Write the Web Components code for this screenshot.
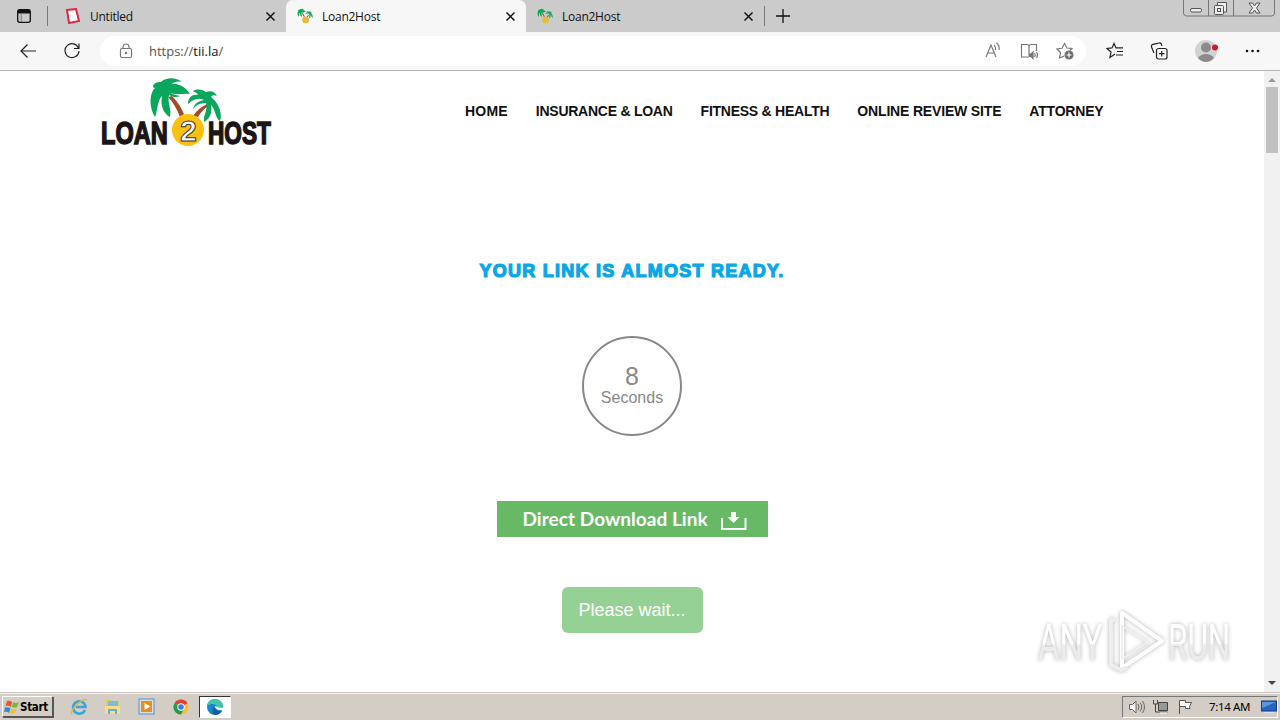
<!DOCTYPE html>
<html lang="en">
<head>
<meta charset="utf-8">
<title>Loan2Host</title>
<style>
  body {
    margin: 0;
    width: 1280px;
    height: 720px;
    overflow: hidden;
    display: flex;
    flex-direction: column;
    font-family: "Liberation Sans", Arial, sans-serif;
    background: #fff;
  }
  .view {
    display: flex;
    height: 621px;
  }
</style>
</head>
<body>
<tab-strip>
  <browser-tab icon="page" style="width:232px">Untitled</browser-tab>
  <browser-tab icon="palm" active style="width:240px">Loan2Host</browser-tab>
  <browser-tab icon="palm" style="width:238px">Loan2Host</browser-tab>
</tab-strip>
<address-bar><b>tii.la</b>/</address-bar>
<div class="view">
  <loan-page>
    <site-header slot="header">
      <a style="letter-spacing:.2px">HOME</a>
      <a style="letter-spacing:-.25px">INSURANCE &amp; LOAN</a>
      <a style="letter-spacing:-.25px">FITNESS &amp; HEALTH</a>
      <a style="letter-spacing:-.17px">ONLINE REVIEW SITE</a>
      <a style="letter-spacing:-.2px">ATTORNEY</a>
    </site-header>
    <count-down value="8">Seconds</count-down>
    <download-button>Direct Download Link</download-button>
    <wait-button>Please wait...</wait-button>
  </loan-page>
  <scroll-bar></scroll-bar>
</div>
<task-bar>7:14 AM</task-bar>

<script>
const palm = `
  <path d="M78 26L82 25C87 30 91 36 94 43L90 46C87 38 83 31 78 26Z" fill="#a34c2c"/>
  <path d="M117 33C111 36 106 40 103 45L108 46C111 41 114 38 118 35Z" fill="#a34c2c"/>
  <g fill="#0aa65b">
    <path d="M78 21C87 25 92 22 100 23C96 16 88 12 81 13C84 11 88 10 92 11C86 6 76 6 71 11C65 10 60 16 65 17C59 22 59 37 65 46C68 39 67 30 72 25C70 35 74 43 80 46C82 38 77 32 79 24C84 27 87 26 90 25C86 24 82 23 78 21Z"/>
    <path d="M114 29C108 26 102 29 98 33C98 26 103 23 108 24C107 21 104 21 103 20C108 17 113 19 116 21C121 19 125 21 127 25C124 24 122 24 121 26C128 31 133 42 130 50C125 47 126 39 121 34C122 41 121 47 114 51C113 44 118 40 116 32C110 32 106 34 103 38C104 33 108 30 114 29Z"/>
  </g>`;

class BrowserTab extends HTMLElement {
  constructor() {
    super();
    this.attachShadow({ mode: "open" });
    const icon = this.getAttribute("icon") === "palm"
      ? `<svg width="16" height="16" viewBox="58 4 74 74"><circle cx="98" cy="59" r="16" fill="#e2bd43"/>${palm}</svg>`
      : `<svg width="16" height="16" viewBox="0 0 16 16"><path d="M2 2l9-1 3 12-10 2z" fill="#fff" stroke="#e2263f" stroke-width="2"/></svg>`;
    this.shadowRoot.innerHTML = `
      <style>
        :host {
          box-sizing: border-box;
          display: flex;
          align-items: center;
          height: 32px;
          padding: 0 10px 0 11px;
          font: 12px "Open Sans", sans-serif;
          color: #111;
        }
        :host([active]) {
          background: #f7f7f7;
          border-radius: 7px 7px 0 0;
        }
        .title {
          flex: 1;
          margin-left: 9px;
          letter-spacing: -.25px;
          white-space: nowrap;
        }
      </style>
      ${icon}
      <span class="title"><slot></slot></span>
      <svg width="11" height="11" viewBox="0 0 11 11"><path d="M1.5 1.5l8 8m0-8l-8 8" stroke="#111" stroke-width="1.5"/></svg>
    `;
  }
}
customElements.define("browser-tab", BrowserTab);

class TabStrip extends HTMLElement {
  constructor() {
    super();
    this.attachShadow({ mode: "open" });
    this.shadowRoot.innerHTML = `
      <style>
        :host {
          display: flex;
          height: 32px;
          background: #cbcbcb;
        }
        .menu {
          display: flex;
          align-items: center;
          width: 31px;
          padding-left: 16px;
        }
        .line {
          width: 1px;
          height: 20px;
          margin-top: 6px;
          background: #777;
        }
        .tabs {
          display: flex;
          margin-left: 6px;
        }
        .plus {
          margin: 9px 0 0 11px;
        }
        .window {
          margin: -1px 4px 0 auto;
        }
      </style>
      <div class="menu">
        <svg width="16" height="16" viewBox="0 0 16 16"><rect x="1.7" y="1.7" width="12.6" height="12.6" rx="2" fill="none" stroke="#111" stroke-width="1.3"/><path d="M2 2h12v3.5H2z" fill="#111"/><path d="M5.2 5v9" stroke="#777"/></svg>
      </div>
      <div class="line"></div>
      <div class="tabs"><slot></slot></div>
      <div class="line"></div>
      <svg class="plus" width="14" height="14" viewBox="0 0 14 14"><path d="M7 0v14M0 7h14" stroke="#111" stroke-width="1.3"/></svg>
      <svg class="window" width="94" height="18" viewBox="0 0 94 18" fill="none" stroke="#777">
        <path d="M1.500 0v14q0 3 3 3h85q3 0 3-3V0M26.500 0v17M51.500 0v17"/>
        <g stroke="#555">
          <rect x="8.500" y="9.500" width="11" height="3.500" rx="1.500" fill="#eee"/>
          <path d="M35.500 6V3.500h9V13H42" fill="#eee"/>
          <rect x="32.500" y="6.500" width="9" height="9" rx="1" fill="#eee"/>
          <rect x="35.500" y="9.500" width="3" height="3"/>
          <path d="M67 4h3.500l2 3 2-3H78l-3.500 5 3.500 5h-3.500l-2-3-2 3H67l3.500-5z" fill="#eee"/>
        </g>
      </svg>
    `;
  }
}
customElements.define("tab-strip", TabStrip);

class AddressBar extends HTMLElement {
  constructor() {
    super();
    this.attachShadow({ mode: "open" });
    this.shadowRoot.innerHTML = `
      <style>
        :host {
          box-sizing: border-box;
          display: flex;
          align-items: center;
          height: 39px;
          padding: 0 20px 0 20px;
          background: #f7f7f7;
          border-bottom: 1px solid #b4b4b4;
          font: 13px "Open Sans", sans-serif;
          color: #555;
        }
        .reload {
          margin-left: 28px;
        }
        .field {
          box-sizing: border-box;
          display: flex;
          align-items: center;
          width: 988px;
          height: 30px;
          margin-left: 20px;
          padding: 0 12px 0 18px;
          border-radius: 15px;
          background: #fff;
        }
        .url {
          flex: 1;
          margin-left: 15px;
        }
        ::slotted(b) {
          font-weight: normal;
          color: #111;
        }
        .reading {
          display: flex;
          gap: 18px;
        }
        .tools {
          display: flex;
          align-items: center;
          gap: 26px;
          margin-left: 20px;
        }
        svg {
          display: block;
          fill: none;
          stroke: #222;
          stroke-width: 1.2;
        }
        .field svg {
          stroke: #777;
        }
      </style>
      <svg width="16" height="16" viewBox="0 0 16 16"><path d="M16 8H1M7.500 1.500L1 8l6.500 6.500"/></svg>
      <svg class="reload" width="16" height="16" viewBox="0 0 16 16"><path d="M14.500 5A7 7 0 1 0 15 8M15 .5V5.500h-5"/></svg>
      <div class="field">
        <svg width="16" height="16" viewBox="0 0 16 16"><rect x="2.500" y="5.500" width="11" height="9" rx="1.500"/><path d="M5 5.500V4a3 3 0 0 1 6 0v1.500"/><circle cx="8" cy="10" r=".6"/></svg>
        <span class="url">https://<slot></slot></span>
        <div class="reading">
          <svg width="18" height="18" viewBox="0 0 18 18"><path d="M2 15L7 3l5 12M4 11h6M10 3q2 2 1.500 5M12.500 1q3.500 3 2.500 7"/></svg>
          <svg width="18" height="18" viewBox="0 0 18 18"><path d="M9 15H1.500V2.500H7q2 0 2 2v9M9 4.500q0-2 2-2h5.500V9M14.500 11q1.500 2 0 4M16.500 10q2 3 0 6"/><path d="M9.500 12h1.500l2-2v6.500l-2-2H9.500z" fill="#777"/></svg>
          <svg width="18" height="18" viewBox="0 0 18 18"><path d="M8 14l-4.500 2 1-5.500L1 7l5-.7L8.500 1.500 11 6l5 .5-2 2"/><circle cx="13" cy="13" r="4" fill="#666"/><path d="M13 10.500v5M10.500 13h5" style="stroke:#fff"/></svg>
        </div>
      </div>
      <div class="tools">
        <svg width="18" height="18" viewBox="0 0 18 18"><path d="M9 12l-5 3.500L5 10 1 6.500l5-.6L8 1.500l2 4.400h7M11 9.500h6M10 13h7"/></svg>
        <svg width="18" height="18" viewBox="0 0 18 18"><rect x="6.500" y="6.500" width="10.500" height="10.500" rx="2"/><path d="M11.700 9v5.500M9 11.700h5.500M4 11L1.500 5q-.5-2 1.500-2.700L9 1q2-.5 2.500 1.500L12 4"/></svg>
        <svg width="24" height="24" viewBox="0 0 24 24" style="stroke:none"><circle cx="12" cy="12" r="11" fill="#d2d2d2"/><circle cx="12" cy="8.500" r="5" fill="#8b8b8b"/><path d="M4 19q3-4 8-4t8 4q-8 8-16 0z" fill="#8b8b8b"/><circle cx="21" cy="8.500" r="3" fill="#dc1420"/></svg>
        <svg width="16" height="6" viewBox="0 0 16 6" style="fill:#111;stroke:none"><circle cx="3" cy="3" r="1.300"/><circle cx="8.500" cy="3" r="1.300"/><circle cx="14" cy="3" r="1.300"/></svg>
      </div>
    `;
  }
}
customElements.define("address-bar", AddressBar);

class SiteHeader extends HTMLElement {
  constructor() {
    super();
    this.attachShadow({ mode: "open" });
    this.shadowRoot.innerHTML = `
      <style>
        :host {
          display: flex;
          height: 84px;
          padding-left: 90px;
        }
        nav {
          display: flex;
          gap: 28px;
          padding-top: 32px;
          margin-left: 175px;
          white-space: nowrap;
        }
        ::slotted(a) {
          font: bold 14px/17px "Liberation Sans", Arial, sans-serif;
          color: #111;
        }
      </style>
      <svg width="200" height="84" viewBox="0 0 200 84">
        ${palm}
        <circle cx="98" cy="59" r="16" fill="#fdc010"/>
        <g font-family="Liberation Sans, Arial, sans-serif" font-weight="bold" fill="#1b1515">
          <g font-size="31" stroke="#1b1515" stroke-width="1.600">
            <text transform="translate(11 72.500) scale(.76 1)">LOAN</text>
            <text transform="translate(118 72.500) scale(.73 1)">HOST</text>
          </g>
          <text x="90" y="70" font-size="30" fill="#fff" stroke="#333" stroke-width="1">2</text>
        </g>
      </svg>
      <nav><slot></slot></nav>
    `;
  }
}
customElements.define("site-header", SiteHeader);

class CountDown extends HTMLElement {
  constructor() {
    super();
    this.attachShadow({ mode: "open" });
    this.shadowRoot.innerHTML = `
      <style>
        :host {
          box-sizing: border-box;
          display: flex;
          flex-direction: column;
          align-items: center;
          width: 100px;
          height: 100px;
          padding-top: 26px;
          border: 2px solid #888;
          border-radius: 50%;
          color: #888;
          font-size: 16px;
          line-height: 18px;
        }
        .value {
          font-size: 25px;
          line-height: 25px;
        }
      </style>
      <span class="value">${this.getAttribute("value")}</span>
      <span><slot></slot></span>
    `;
  }
}
customElements.define("count-down", CountDown);

class DownloadButton extends HTMLElement {
  constructor() {
    super();
    this.attachShadow({ mode: "open" });
    this.shadowRoot.innerHTML = `
      <style>
        :host {
          box-sizing: border-box;
          display: flex;
          align-items: center;
          width: 271px;
          height: 36px;
          margin-top: 65px;
          padding-left: 26px;
          background: #68b966;
          color: #fff;
          font: bold 19px Lato, sans-serif;
          white-space: nowrap;
        }
        span {
          width: 198px;
          padding-bottom: 2px;
          letter-spacing: .05px;
        }
        svg {
          margin-top: 3px;
        }
      </style>
      <span><slot></slot></span>
      <svg width="26" height="20" viewBox="0 0 26 20"><path d="M1 7v11h23.500V7" fill="none" stroke="#fff" stroke-width="2"/><path d="M10 1h5v5h3.500l-6 6-6-6H10z" fill="#fff"/></svg>
    `;
  }
}
customElements.define("download-button", DownloadButton);

class WaitButton extends HTMLElement {
  constructor() {
    super();
    this.attachShadow({ mode: "open" });
    this.shadowRoot.innerHTML = `
      <style>
        :host {
          display: flex;
          align-items: center;
          justify-content: center;
          width: 141px;
          height: 46px;
          margin-top: 50px;
          border-radius: 6px;
          background: #95d195;
          color: #fff;
          font-size: 18px;
        }
      </style>
      <slot></slot>
    `;
  }
}
customElements.define("wait-button", WaitButton);

class LoanPage extends HTMLElement {
  constructor() {
    super();
    this.attachShadow({ mode: "open" });
    this.shadowRoot.innerHTML = `
      <style>
        :host {
          position: relative;
          display: block;
          width: 1264px;
          background: #fff;
        }
        main {
          display: flex;
          flex-direction: column;
          align-items: center;
        }
        h1 {
          margin: 104px 0 53px;
          font-size: 18px;
          line-height: 24px;
          font-weight: bold;
          letter-spacing: 1.25px;
          color: #0ba6e6;
          -webkit-text-stroke: 1.2px #0ba6e6;
        }
        .mark {
          position: absolute;
          left: 1030px;
          top: 532px;
          filter: drop-shadow(0 0 2px rgba(0, 0, 0, .3));
        }
      </style>
      <slot name="header"></slot>
      <main>
        <h1>YOUR LINK IS ALMOST READY.</h1>
        <slot></slot>
      </main>
      <svg class="mark" width="210" height="76" viewBox="0 0 210 76">
        <defs><linearGradient id="fade" x2="0" y2="1"><stop offset=".5" stop-color="#fff"/><stop offset=".55" stop-color="#ececec"/></linearGradient></defs>
        <g font-family="Roboto, sans-serif" font-size="50" fill="url(#fade)">
          <text transform="translate(8 57) scale(.66 1)">ANY</text>
          <text transform="translate(138 57) scale(.63 1)">RUN</text>
        </g>
        <g fill="none" stroke="#fff" stroke-width="4" stroke-linejoin="round">
          <path d="M92 10l40 28-40 27z"/>
          <path d="M85 17h-4v45l10 5 6-3" stroke="#eee"/>
          <path d="M92 23l26 16-26 17z" stroke-width="2" stroke="#f0f0f0"/>
        </g>
      </svg>
    `;
  }
}
customElements.define("loan-page", LoanPage);

class ScrollBar extends HTMLElement {
  constructor() {
    super();
    this.attachShadow({ mode: "open" });
    this.shadowRoot.innerHTML = `
      <style>
        :host {
          display: flex;
          flex-direction: column;
          align-items: center;
          width: 16px;
          background: #f1f1f1;
        }
        .thumb {
          width: 12px;
          height: 66px;
          margin: 5px 0 auto;
          background: #c1c1c1;
        }
      </style>
      <svg width="8" height="4" viewBox="0 0 8 4" style="margin-top:7px"><path d="M0 4l4-4 4 4z" fill="#999"/></svg>
      <div class="thumb"></div>
      <svg width="8" height="5" viewBox="0 0 8 5" style="margin-bottom:6px"><path d="M0 0l4 4 4-4z" fill="#444"/></svg>
    `;
  }
}
customElements.define("scroll-bar", ScrollBar);

class TaskBar extends HTMLElement {
  constructor() {
    super();
    this.attachShadow({ mode: "open" });
    this.shadowRoot.innerHTML = `
      <style>
        :host {
          box-sizing: border-box;
          display: flex;
          align-items: center;
          height: 28px;
          padding: 0 2px;
          background: #d4cdc5;
          border-top: 1px solid #c9c4bd;
          box-shadow: inset 0 1px #f7f5f2;
          color: #000;
        }
        .start {
          box-sizing: border-box;
          display: flex;
          align-items: center;
          width: 51px;
          height: 21px;
          padding-left: 1px;
          border: 1px solid;
          border-color: #fff #555 #555 #fff;
          box-shadow: 1px 1px #555;
          font: bold 11.500px "DejaVu Sans Condensed", "DejaVu Sans", sans-serif;
          letter-spacing: -.3px;
        }
        .apps {
          display: flex;
          align-items: center;
          gap: 16px;
          margin-left: 17px;
        }
        .open {
          box-sizing: border-box;
          display: flex;
          align-items: center;
          justify-content: center;
          width: 32px;
          height: 22px;
          margin-left: -7px;
          border: 1px solid;
          border-color: #333 #fff #fff #333;
          background: #fff;
        }
        .tray {
          box-sizing: border-box;
          display: flex;
          align-items: center;
          width: 156px;
          height: 22px;
          margin-left: auto;
          padding-left: 5px;
          border: 1px solid;
          border-color: #777 #fff #fff #777;
          font: 11.500px "Noto Sans", sans-serif;
          letter-spacing: -.35px;
        }
        .time {
          width: 52px;
          margin-left: 9px;
          white-space: nowrap;
        }
        .tray svg {
          margin-right: 6px;
        }
      </style>
      <div class="start">
        <svg width="16" height="16" viewBox="0 0 16 16"><path d="M3 2q3-1 5 1L7 8Q4 6 1.500 7z" fill="#e65a25"/><path d="M9 3q3 2 6 0l-2 5q-3 1-5 0z" fill="#7ab63b"/><path d="M1 8.500q3-1 5.500 1L5 14q-2-2-5-1z" fill="#3589d1"/><path d="M7.500 9.500q2 1.500 5 .5l-1.500 4q-3 1-5 0z" fill="#f5bd29"/></svg>
        <span>Start</span>
      </div>
      <div class="apps">
        <svg width="18" height="18" viewBox="0 0 18 18" fill="none"><path d="M15 12a6.200 6.200 0 1 1 .5-3H6" stroke="#39a5df" stroke-width="2.600"/><path d="M2 16C-1 13 13-1 17 2" stroke="#e5b73c" stroke-width="1.500"/></svg>
        <svg width="18" height="18" viewBox="0 0 18 18"><path d="M2 2h6l1 2h6v12H2z" fill="#e9c756"/><path d="M4 3h10v6H4z" fill="#79bce1"/><path d="M1 8h15v8H1z" fill="#f6df88"/><path d="M4 16v-5h9v5h-2v-3H6v3z" fill="#64afd8"/></svg>
        <svg width="18" height="18" viewBox="0 0 18 18"><rect x="1" y="1" width="15" height="15" fill="#cfe2ee" stroke="#5794c0"/><rect x="3" y="3" width="11" height="11" fill="#f08a18"/><path d="M6.500 5l6 3.500-6 3.500z" fill="#fff"/></svg>
        <svg width="18" height="18" viewBox="0 0 18 18"><circle cx="9" cy="9" r="7.500" fill="#f5c22b"/><path d="M9 9L2.500 5.200a7.500 7.500 0 0 1 13 0z" fill="#df4235"/><path d="M2.500 5.200A7.500 7.500 0 0 0 9 16.500l3-6z" fill="#299a4c"/><circle cx="9" cy="9" r="3.700" fill="#fff"/><circle cx="9" cy="9" r="2.800" fill="#367ee8"/></svg>
        <div class="open">
          <svg width="18" height="18" viewBox="0 0 18 18"><circle cx="9" cy="9" r="8" fill="#1686cf"/><path d="M1 8C2-1 16-1 17 8c0 4-5 4-7 2 2-3-3-6-9-2z" fill="#43c5a7"/><path d="M8 9q1 5 8 4-3 4-7 4-5-2-1-8z" fill="#135a9d"/><path d="M9 8q0 5 9 4V8q-1 4-9 0z" fill="#fff"/></svg>
        </div>
      </div>
      <div class="tray">
        <svg width="18" height="16" viewBox="0 0 18 16" fill="#fff" stroke="#666"><path d="M1.500 5.500h3L8 2v12l-3.500-3.500h-3z"/><path d="M10 5q2 3 0 6M12 3.500q3.500 4.500 0 9M14.500 2q4 6 0 12" fill="none"/></svg>
        <svg width="18" height="16" viewBox="0 0 18 16"><path d="M6.500 3.500h9v8h-9z" fill="#999" stroke="#444"/><path d="M1.500 1v4h4V1M3.500 5v8h12" fill="none" stroke="#444"/><path d="M8 14h7" stroke="#fff"/></svg>
        <svg width="18" height="16" viewBox="0 0 18 16" fill="#fff" stroke="#555"><path d="M3.500 15V1.500h6v2h6l-2 4 .5 2H9.500v-2h-6"/></svg>
        <span class="time"><slot></slot></span>
        <svg width="16" height="14" viewBox="0 0 16 14" style="margin:0"><rect x=".5" y="1" width="15" height="10" fill="#2465bd" stroke="#173f7e"/><path d="M1 2h14L1 8z" fill="#579ae0"/><path d="M3 12.500h10" stroke="#dce6ef"/></svg>
      </div>
    `;
  }
}
customElements.define("task-bar", TaskBar);
</script>
</body>
</html>
